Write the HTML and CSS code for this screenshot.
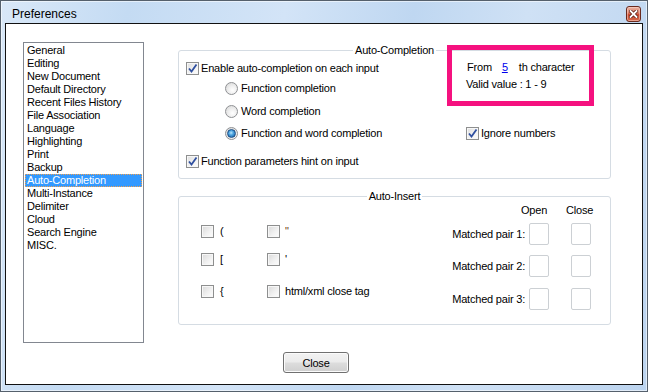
FILE: index.html
```html
<!DOCTYPE html>
<html>
<head>
<meta charset="utf-8">
<title>Preferences</title>
<link rel="stylesheet" href="styles.css">
</head>
<body>
<div class="window">
  <div class="titlebar">
    <span class="title">Preferences</span>
    <span class="close-x">
      <svg width="9" height="8" viewBox="0 0 9 8"><path d="M1.5 1 L7.5 7 M7.5 1 L1.5 7" stroke="#5b1c12" stroke-width="3.4" stroke-linecap="square"/><path d="M1.5 1 L7.5 7 M7.5 1 L1.5 7" stroke="#ffffff" stroke-width="1.8" stroke-linecap="square"/></svg>
    </span>
  </div>
  <div class="client">
    <div class="main">
      <ul class="list">
        <li>General</li>
        <li>Editing</li>
        <li>New Document</li>
        <li>Default Directory</li>
        <li>Recent Files History</li>
        <li>File Association</li>
        <li>Language</li>
        <li>Highlighting</li>
        <li>Print</li>
        <li>Backup</li>
        <li class="sel">Auto-Completion</li>
        <li>Multi-Instance</li>
        <li>Delimiter</li>
        <li>Cloud</li>
        <li>Search Engine</li>
        <li>MISC.</li>
      </ul>
      <div class="panel">
        <fieldset class="group g1">
          <legend>Auto-Completion</legend>
          <div class="g1-body">
            <div class="col-left">
              <div class="row r1"><span class="cb on"><svg width="11" height="11" viewBox="0 0 11 11"><path d="M2 5.5 L4.5 8.5 L9.5 1.5" fill="none" stroke="#2f4f9f" stroke-width="1.8"/></svg></span><span>Enable auto-completion on each input</span></div>
              <div class="row r2 indent"><span class="rb"></span><span>Function completion</span></div>
              <div class="row r3 indent"><span class="rb"></span><span>Word completion</span></div>
              <div class="row r4 indent"><span class="rb on"></span><span>Function and word completion</span></div>
              <div class="row r5"><span class="cb on"><svg width="11" height="11" viewBox="0 0 11 11"><path d="M2 5.5 L4.5 8.5 L9.5 1.5" fill="none" stroke="#2f4f9f" stroke-width="1.8"/></svg></span><span>Function parameters hint on input</span></div>
            </div>
            <div class="col-right">
              <div class="from"><span class="w-from">From</span><span class="num">5</span><span>th character</span></div>
              <div class="valid">Valid value : 1 - 9</div>
              <div class="row ignore"><span class="cb on"><svg width="11" height="11" viewBox="0 0 11 11"><path d="M2 5.5 L4.5 8.5 L9.5 1.5" fill="none" stroke="#2f4f9f" stroke-width="1.8"/></svg></span><span>Ignore numbers</span></div>
            </div>
          </div>
        </fieldset>
        <fieldset class="group g2">
          <legend>Auto-Insert</legend>
          <div class="g2-body">
            <div class="chars">
              <div class="crow c1"><div class="cell first"><span class="cb plain"></span><span>(</span></div><div class="cell"><span class="cb plain"></span><span class="dq">"</span></div></div>
              <div class="crow c2"><div class="cell first"><span class="cb plain"></span><span>[</span></div><div class="cell"><span class="cb plain"></span><span>'</span></div></div>
              <div class="crow c3"><div class="cell first"><span class="cb plain"></span><span>{</span></div><div class="cell"><span class="cb plain"></span><span>html/xml close tag</span></div></div>
            </div>
            <div class="pairs">
              <div class="prow hdr-row"><span class="hdr open">Open</span><span class="hdr close">Close</span></div>
              <div class="prow p1"><span class="plabel">Matched pair 1:</span><span class="box"></span><span class="box second"></span></div>
              <div class="prow p2"><span class="plabel">Matched pair 2:</span><span class="box"></span><span class="box second"></span></div>
              <div class="prow p3"><span class="plabel">Matched pair 3:</span><span class="box"></span><span class="box second"></span></div>
            </div>
          </div>
        </fieldset>
      </div>
    </div>
    <div class="actions"><button class="btn">Close</button></div>
    <div class="mark"></div>
  </div>
</div>
</body>
</html>
```

FILE: styles.css
```css
* { box-sizing: border-box; }
html, body { margin: 0; padding: 0; }
body {
  width: 648px;
  height: 392px;
  overflow: hidden;
  font-family: "Liberation Sans", Arial, sans-serif;
  font-size: 11px;
  color: #000;
  letter-spacing: -0.2px;
}
.window {
  width: 648px;
  height: 392px;
  border: 1px solid #55606c;
  box-shadow: inset 0 0 0 1px rgba(255,255,255,0.55);
  background: linear-gradient(100deg, #d9e8f8 0%, #c4dbf3 18%, #d3e4f7 40%, #bfd7f1 58%, #cfe1f5 74%, #bcd4ef 100%);
  padding: 0 4px 6px 4px;
  display: flex;
  flex-direction: column;
}
.titlebar {
  height: 22px;
  display: flex;
  align-items: center;
  justify-content: space-between;
  padding-left: 7px;
  padding-right: 2px;
}
.title {
  font-size: 12px;
  letter-spacing: 0;
  color: #000;
  margin-top: 4px;
}
.close-x {
  width: 15px;
  height: 16px;
  margin-top: 4px;
  border: 1px solid #6a2a1e;
  border-radius: 3px;
  background: linear-gradient(180deg, #eab4a4 0%, #dc7e68 42%, #c7462c 55%, #d3694c 100%);
  box-shadow: inset 0 0 0 1px rgba(255,220,210,0.5);
  display: flex;
  align-items: center;
  justify-content: center;
}
.client {
  position: relative;
  flex: 1;
  background: #fff;
  border: 1px solid #111;
  padding: 18px 0 0 17px;
}
.main {
  display: flex;
  align-items: flex-start;
}
.list {
  list-style: none;
  margin: 0;
  padding: 1px;
  width: 121px;
  height: 301px;
  border: 1px solid #828790;
}
.list li {
  height: 13px;
  line-height: 13px;
  padding-left: 2px;
  white-space: nowrap;
}
.list li.sel {
  background: #3399ff;
  color: #fff;
  outline: 1px dotted #f0a050;
  outline-offset: -1px;
}
.panel {
  margin-left: 34px;
  width: 433px;
  padding-top: 2px;
}
.group {
  margin: 0;
  padding: 0;
  min-inline-size: 0;
  width: 433px;
  border: 1px solid #d5dce3;
  border-radius: 3px;
}
.group legend {
  margin: 0 auto;
  padding: 0 2px;
  line-height: 13px;
  font-size: 11px;
}
.g2 { margin-top: 11px; }
.g1-body {
  height: 121px;
  display: flex;
  padding-left: 7px;
}
.col-left {
  width: 280px;
  display: flex;
  flex-direction: column;
}
.row {
  height: 20px;
  display: flex;
  align-items: center;
  white-space: nowrap;
}
.r1 { margin-top: 1px; }
.r3 { margin-top: 3px; }
.r4 { margin-top: 2px; }
.r5 { margin-top: 8px; }
.indent { padding-left: 39px; }
.cb {
  width: 13px;
  height: 13px;
  flex: none;
  border: 1px solid #8e8f8f;
  background: linear-gradient(135deg, #d9d9d9 0%, #f2f2f2 60%, #fdfdfd 100%);
  box-shadow: inset 0 0 0 1px #f7f7f7;
  margin-right: 2px;
  display: flex;
  align-items: center;
  justify-content: center;
}
.cb.on { background: linear-gradient(135deg, #dedede 0%, #f3f3f3 60%, #fdfdfd 100%); }
.rb {
  width: 13px;
  height: 13px;
  flex: none;
  border-radius: 50%;
  border: 1px solid #8f9194;
  background: radial-gradient(circle at 60% 65%, #ffffff 0%, #f0f0f0 40%, #d4d4d4 100%);
  margin-right: 3px;
  display: flex;
  align-items: center;
  justify-content: center;
}
.rb.on::after {
  content: "";
  width: 7px;
  height: 7px;
  border-radius: 50%;
  background: radial-gradient(circle at 45% 40%, #b8e6fb 0%, #4aa3e0 40%, #175595 100%);
  border: 1px solid #1b4e86;
}
.col-right {
  flex: 1;
  display: flex;
  flex-direction: column;
  white-space: nowrap;
}
.from {
  margin-top: 4px;
  line-height: 13px;
  padding-left: 1px;
}
.w-from { margin-right: 10px; }
.num {
  color: #0000ee;
  text-decoration: underline;
  margin-right: 11px;
}
.valid {
  margin-top: 4px;
  line-height: 13px;
}
.ignore { margin-top: 32px; }
.g2-body {
  height: 121px;
  display: flex;
  padding-left: 22px;
  padding-right: 19px;
}
.chars {
  display: flex;
  flex-direction: column;
}
.crow {
  display: flex;
  height: 20px;
  align-items: center;
}
.c1 { margin-top: 18px; }
.c2 { margin-top: 8px; }
.c3 { margin-top: 12px; }
.cell {
  display: flex;
  align-items: center;
  white-space: nowrap;
}
.cell.first { width: 66px; }
.cell .cb { margin-right: 5px; }
.cell.first .cb { margin-right: 6px; }
.dq { color: #6a3a10; }
.pairs {
  margin-left: auto;
  display: flex;
  flex-direction: column;
}
.prow {
  display: flex;
  justify-content: flex-end;
  align-items: center;
}
.hdr-row { margin-top: 1px; line-height: 13px; }
.hdr {
  width: 20px;
  white-space: nowrap;
}
.hdr.open { text-indent: -8px; }
.hdr.close { margin-left: 22px; text-indent: -5px; }
.p1 { margin-top: 6px; }
.p2 { margin-top: 10px; }
.p3 { margin-top: 11px; }
.plabel { margin-right: 4px; white-space: nowrap; }
.box {
  width: 20px;
  height: 22px;
  border: 1px solid #ccd0d4;
  border-radius: 2px;
  background: #fff;
}
.box.second { margin-left: 22px; }
.actions {
  width: 586px;
  margin-top: 9px;
  display: flex;
  justify-content: center;
}
.btn {
  width: 66px;
  height: 21px;
  padding: 0;
  font-family: "Liberation Sans", Arial, sans-serif;
  font-size: 11px;
  letter-spacing: -0.2px;
  color: #000;
  border: 1px solid #707070;
  border-radius: 3px;
  background: linear-gradient(180deg, #f2f2f2 0%, #ebebeb 48%, #dddddd 52%, #cfcfcf 100%);
  box-shadow: inset 0 0 0 1px #fbfbfb;
}
.mark {
  position: absolute;
  left: 441px;
  top: 21px;
  width: 147px;
  height: 61px;
  border: 5px solid #f5117f;
}
```
